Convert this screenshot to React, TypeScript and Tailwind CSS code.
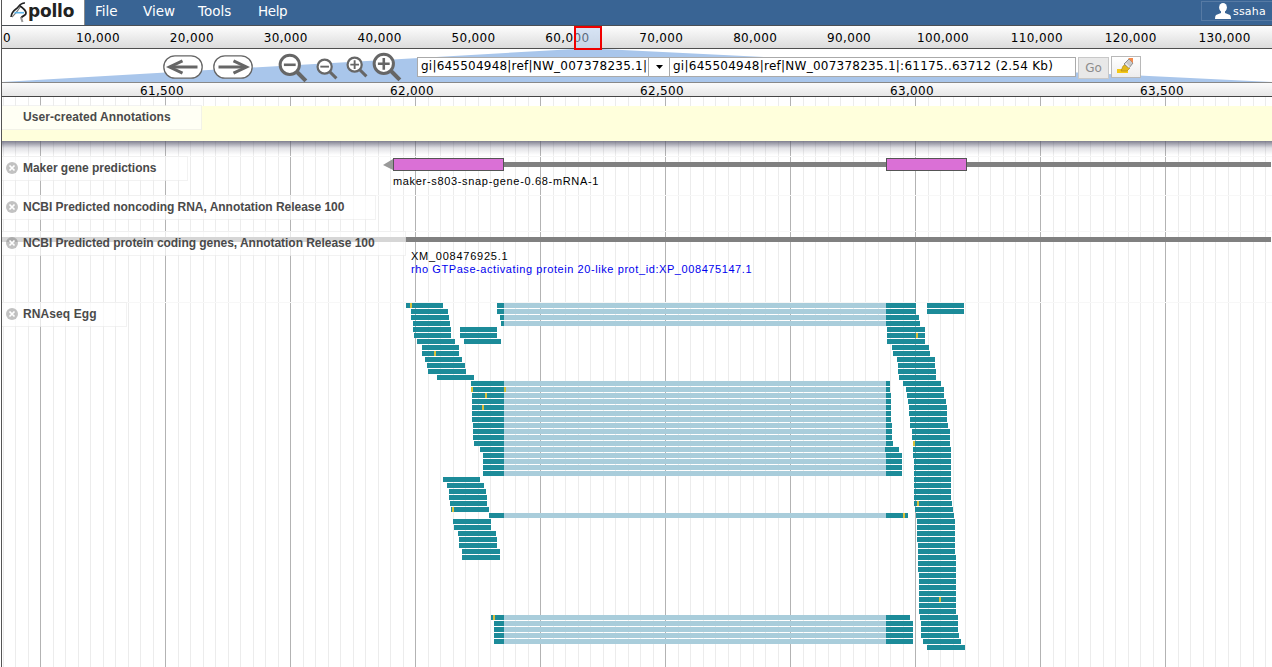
import React from "react";

const MENU = ["File", "View", "Tools", "Help"];
const OVERVIEW = ["10,000", "20,000", "30,000", "40,000", "50,000", "60,000", "70,000", "80,000", "90,000", "100,000", "110,000", "120,000", "130,000"];
const DETAIL = ["61,500", "62,000", "62,500", "63,000", "63,500"];

// [row, start, end]
const READS: number[][] = [
  [0, 406, 443], [1, 411, 448], [2, 411, 449], [3, 413, 450], [4, 413, 451], [5, 414, 451], [6, 417, 455],
  [7, 422, 459], [8, 422, 459], [9, 425, 462], [10, 427, 465], [11, 428, 466], [12, 437, 474],
  [4, 460, 497], [5, 460, 497], [6, 464, 501],
  [29, 443, 480], [30, 447, 484], [31, 449, 486], [32, 449, 487], [33, 450, 487], [34, 451, 489],
  [36, 453, 491], [37, 454, 491], [38, 458, 496], [39, 459, 497], [40, 459, 497], [41, 462, 500], [42, 462, 500],
  [0, 927, 964], [1, 927, 964], [4, 887, 925], [5, 887, 925], [6, 887, 925], [7, 892, 929], [8, 893, 930],
  [9, 897, 935], [10, 898, 935], [11, 898, 936], [12, 899, 936], [13, 903, 941], [14, 906, 944], [15, 907, 944],
  [16, 908, 946], [17, 909, 947], [18, 909, 947], [19, 910, 947], [20, 910, 948], [21, 912, 950], [22, 912, 950],
  [23, 913, 950], [24, 913, 951], [25, 913, 951], [26, 914, 951], [27, 914, 951], [28, 914, 951], [29, 914, 951],
  [30, 914, 951], [31, 914, 951], [32, 914, 951], [33, 914, 952], [34, 915, 953], [35, 916, 954], [36, 917, 955],
  [37, 917, 955], [38, 917, 955], [39, 917, 955], [40, 918, 955], [41, 918, 955], [42, 918, 956], [43, 918, 956],
  [44, 918, 956], [45, 919, 956], [46, 919, 956], [47, 919, 956], [48, 919, 956], [49, 919, 956], [50, 919, 956],
  [51, 919, 956], [52, 920, 958], [53, 921, 958], [54, 921, 958], [55, 921, 959], [56, 923, 961], [57, 927, 965],
];

// reads split over an intron: [row, start, end, start of the second exon]
const SPLICED: number[][] = [
  [0, 497, 916, 886], [1, 497, 916, 886], [2, 500, 919, 886], [3, 501, 920, 886],
  [13, 471, 890, 886], [14, 471, 890, 886], [15, 472, 891, 886], [16, 472, 891, 886], [17, 472, 891, 886],
  [18, 472, 891, 886], [19, 472, 891, 886], [20, 473, 892, 886], [21, 473, 892, 886], [22, 473, 892, 886],
  [23, 474, 893, 886], [24, 480, 899, 885], [25, 483, 902, 886], [26, 483, 902, 886], [27, 483, 902, 886],
  [28, 483, 902, 886], [35, 489, 908, 886],
  [52, 491, 910, 886], [53, 494, 913, 886], [54, 494, 913, 886], [55, 494, 913, 886], [56, 494, 913, 886],
];

// mismatches: [row, x]
const MISMATCHES: number[][] = [
  [0, 410], [8, 434], [14, 471], [14, 504], [15, 485], [17, 482], [34, 452], [52, 493],
  [5, 916], [23, 913], [33, 917], [35, 903], [49, 939],
];

const rowY = (row: number) => 303 + row * 6;

function Logo() {
  return (
    <div className="flex h-[25px] w-[83px] shrink-0 items-start border-r border-[#8a8a8a] bg-white pl-2">
      <svg className="mt-px h-[23px] w-[18px] shrink-0" viewBox="0 0 18 23" fill="none">
        <path d="M15 2C10 1.5 9 6 6 8C3 10 1.5 12 1 16" stroke="#222" strokeWidth="1.6" />
        <path d="M2 16C5 13 8 10 10 6" stroke="#777" strokeWidth="1.2" />
        <path d="M10 5C13 7 16 9 16 12C16 15 13 14 11 17" stroke="#222" strokeWidth="1.8" />
        <path d="M11 16.5L12.5 21" stroke="#999" strokeWidth="2" />
        <path d="M4.5 11.7H14" stroke="#5bb5ea" strokeWidth="1.6" />
      </svg>
      <span className="font-['DejaVu_Sans'] text-[17px] font-bold leading-[23px] tracking-[-0.2px] text-[#222]">pollo</span>
    </div>
  );
}

function ArrowButton({ right = false }: { right?: boolean }) {
  return (
    <svg className={right ? "h-6 w-10 rotate-180" : "h-6 w-10"} viewBox="0 0 40 24" fill="none">
      <rect x="0.8" y="0.8" width="38.4" height="22.4" rx="11.2" fill="#fff" stroke="#666" strokeWidth="1.3" />
      <path d="M34.5 12H8" stroke="#666" strokeWidth="3" />
      <path d="M19.5 5.8L6.5 12L19.5 18.2" stroke="#666" strokeWidth="3" />
    </svg>
  );
}

function Magnifier({ plus = false, className }: { plus?: boolean; className: string }) {
  return (
    <svg className={className} viewBox="0 0 28 28" fill="none">
      <path d="M18 18L26 26" stroke="#666" strokeWidth="3.8" />
      <circle cx="11" cy="11" r="9" fill="#fff" stroke="#666" strokeWidth="2.8" />
      <path d={plus ? "M5.5 11H16.5M11 5.5V16.5" : "M5.5 11H16.5"} stroke="#666" strokeWidth="2.4" />
    </svg>
  );
}

function Highlighter() {
  return (
    <svg className="h-4 w-[18px]" viewBox="0 0 18 16">
      <rect x="0" y="11" width="11" height="4" fill="#f5c816" />
      <path d="M4 13L6 8L9 6L13 10L10 13Z" fill="#e4b81a" stroke="#a98313" strokeWidth=".6" />
      <path d="M7 6L12 1L16 5L12 10Z" fill="#c9c9c9" stroke="#777" strokeWidth=".8" />
      <path d="M8.5 5.5L12.5 9.5" stroke="#eee" strokeWidth="1.3" />
      <path d="M11 0H16V5Z" fill="#f58a4b" />
    </svg>
  );
}

function Label({ text, className, closable = true }: { text: string; className: string; closable?: boolean }) {
  return (
    <div className={`relative z-10 flex h-[25px] items-center border border-l-0 border-[#8888881c] bg-white/68 pl-1 ${className}`}>
      {closable && (
        <svg className="absolute left-[4px] top-[5px] size-3" viewBox="0 0 12 12">
          <circle cx="6" cy="6" r="6" fill="#777" fillOpacity=".45" />
          <path d="M3.5 3.5L8.5 8.5M8.5 3.5L3.5 8.5" stroke="#fff" strokeWidth="1.7" />
        </svg>
      )}
      <span className="whitespace-nowrap pb-[2px] pl-[17px] font-bold text-[#4a4a4a]">{text}</span>
    </div>
  );
}

function Grid() {
  const lines = Array.from({ length: 102 }, (_, i) => i - 3);
  return (
    <svg className="absolute left-0 top-0 h-[570px] w-[1270px]" viewBox="2 97 1270 570" shapeRendering="crispEdges">
      {lines.map((k) => (
        <rect key={k} x={Math.round(40 + k * 12.5)} y="97" width="1" height="570" fill={k % 10 === 0 ? "#b3b3b3" : "#ececec"} />
      ))}
    </svg>
  );
}

function Reads() {
  return (
    <svg className="absolute left-0 top-0 h-[365px] w-[1270px]" viewBox="2 302 1270 365" shapeRendering="crispEdges">
      {READS.map(([row, a, b], i) => (
        <rect key={i} x={a} y={rowY(row)} width={b - a} height="5" fill="#1c8b99" />
      ))}
      {SPLICED.map(([row, a, b, exon]) => (
        <g key={row}>
          <rect x={a} y={rowY(row)} width={504 - a} height="5" fill="#1c8b99" />
          <rect x="504" y={rowY(row)} width={exon - 504} height="5" fill="#a9cddb" />
          <rect x={exon} y={rowY(row)} width={b - exon} height="5" fill="#1c8b99" />
        </g>
      ))}
      {MISMATCHES.map(([row, x]) => (
        <rect key={`${row}-${x}`} x={x} y={rowY(row)} width="2" height="5" fill="#d8bf3c" />
      ))}
    </svg>
  );
}

export default function App() {
  return (
    <div className="h-[667px] w-[1272px] overflow-hidden bg-white pl-px font-['DejaVu_Sans',sans-serif]">
      <div className="flex h-full flex-col border-l border-[#555]">
        <header className="flex h-[26px] shrink-0 border-b border-[#4a4f55] bg-[#396494]">
          <Logo />
          <nav className="flex h-[23px] items-center text-[13.5px] text-white">
            {MENU.map((m, i) => (
              <span key={m} className={["ml-[10px] w-[48px]", "w-[55px]", "w-[60px]", "w-[50px] tracking-[-0.4px]"][i]}>{m}</span>
            ))}
          </nav>
          <div className="ml-auto mt-px flex h-5 w-[71px] items-center border border-r-0 border-[#567aa4] pl-[13px] text-[11px] tracking-[0.2px] text-white">
            <svg className="mr-[2px] h-4 w-4 shrink-0" viewBox="0 0 16 16" fill="#fff">
              <ellipse cx="8" cy="4.5" rx="3.9" ry="4.5" />
              <path d="M6 8H10V10L15 12Q16 13 16 16H0Q0 13 1 12L6 10Z" />
            </svg>
            <span className="mt-[2px]">ssaha</span>
          </div>
        </header>

        <div className="relative flex h-[23px] shrink-0 border-b border-[#4f4f4f] bg-linear-to-b from-[#fdfdfd] to-[#dcdcdc] text-[12px] leading-[24px] tracking-[0.35px] text-black">
          <span className="w-[49px] shrink-0 pl-px">0</span>
          {OVERVIEW.map((t) => (
            <span key={t} className="w-[93.9px] shrink-0 text-center">{t}</span>
          ))}
          <div className="absolute left-[572px] top-0 z-10 h-6 w-7 border-2 border-[#f00000] bg-[#b4cdf0]/50" />
        </div>

        <div className="relative h-[33px] shrink-0">
          <svg className="absolute left-0 top-0 h-[33px] w-[1270px]" viewBox="2 49 1270 33">
            <path d="M575 49H602L1272 82H2Z" fill="#a9c6eb" />
          </svg>
          <div className="relative flex h-full items-start">
            <div className="ml-[161px] mt-[6px] flex gap-[10px]">
              <ArrowButton />
              <ArrowButton right />
            </div>
            <Magnifier className="ml-[25px] mt-[4px] size-[30px]" />
            <Magnifier className="ml-[8px] mt-[9px] size-[22px]" />
            <Magnifier plus className="ml-[8px] mt-[7px] size-[22px]" />
            <Magnifier plus className="ml-[4px] mt-[3px] size-[30px]" />
            <div className="ml-[15px] mt-2 flex h-5 w-[253px] border border-[#aaa] bg-white text-[12px] leading-[17px] text-black">
              <span className="w-[230px] shrink-0 overflow-hidden whitespace-nowrap pl-[3px] tracking-[0.22px]">gi|645504948|ref|NW_007378235.1|</span>
              <span className="flex h-full w-[21px] items-center justify-center border-l border-[#aaa]">
                <svg className="h-1 w-[7px]" viewBox="0 0 7 4"><path d="M0 0H7L3.5 4Z" /></svg>
              </span>
            </div>
            <div className="mt-2 h-5 w-[406px] whitespace-nowrap border border-l-0 border-[#aaa] bg-white pl-[3px] text-[12px] leading-[16px] tracking-[0.25px] text-black">
              gi|645504948|ref|NW_007378235.1|:61175..63712 (2.54 Kb)
            </div>
            <div className="ml-[2px] mt-2 h-[22px] w-[31px] border border-[#c8c8c8] bg-[#e8e8e8] text-center text-[12px] leading-[20px] text-[#8c8c8c]">Go</div>
            <div className="ml-[2px] mt-[7px] flex h-[22px] w-[30px] justify-center border border-[#b8b8b8] bg-linear-to-b from-white to-[#ededed] pt-px">
              <Highlighter />
            </div>
          </div>
        </div>

        <div className="flex h-[15px] shrink-0 border-b border-t border-b-[#444] border-t-[#888] bg-linear-to-b from-[#fbfbfb] to-[#e6e6e6] pl-[35px] text-[12px] leading-[16px] tracking-[0.35px] text-black">
          {DETAIL.map((t) => (
            <span key={t} className="w-[250px] shrink-0 text-center">{t}</span>
          ))}
        </div>

        <main className="relative h-[570px] shrink-0 overflow-hidden font-['Liberation_Sans',sans-serif] text-[12px] text-black">
          <Grid />
          <section className="relative mt-[9px] h-[35px] bg-[#ffffdc]">
            <Label text="User-created Annotations" closable={false} className="-top-px w-[200px] tracking-[0.06px]" />
            <div className="absolute inset-x-0 top-full h-[14px] bg-linear-to-b from-[#55556a]/75 via-[#66667a]/20 to-transparent" />
          </section>
          <section className="relative mt-[15px] h-[39px]">
            <div className="absolute inset-x-0 top-0 h-px bg-[#f7f7f7]" />
            <Label text="Maker gene predictions" className="w-[186px] tracking-[-0.03px]" />
            <svg className="absolute left-0 top-0 h-[20px] w-[1270px]" viewBox="2 156 1270 20">
              <rect x="504" y="162" width="767" height="5" fill="#808080" />
              <path d="M383 165L393 159V170Z" fill="#999" />
              <rect x="393.5" y="158.5" width="110" height="12" fill="#da70d6" stroke="#555" />
              <rect x="886.5" y="158.5" width="80" height="12" fill="#da70d6" stroke="#555" />
            </svg>
            <span className="absolute left-[391px] top-[18px] whitespace-nowrap text-[11px] leading-[14px] tracking-[0.67px]">maker-s803-snap-gene-0.68-mRNA-1</span>
          </section>
          <section className="relative h-[36px]">
            <div className="absolute inset-x-0 top-0 h-px bg-[#f7f7f7]" />
            <Label text="NCBI Predicted noncoding RNA, Annotation Release 100" className="w-[374px] tracking-[-0.03px]" />
          </section>
          <section className="relative h-[71px]">
            <div className="absolute inset-x-0 top-0 h-px bg-[#f7f7f7]" />
            <div className="absolute left-0 right-px top-[6px] h-[5px] bg-[#808080]" />
            <Label text="NCBI Predicted protein coding genes, Annotation Release 100" className="w-[404px] tracking-[-0.035px]" />
            <div className="relative -mt-[6px] ml-[409px] whitespace-nowrap text-[11px] leading-[13px]">
              <p className="tracking-[0.75px]">XM_008476925.1</p>
              <p className="tracking-[0.58px] text-[#0000ee]">rho GTPase-activating protein 20-like prot_id:XP_008475147.1</p>
            </div>
          </section>
          <section className="relative h-[365px]">
            <div className="absolute inset-x-0 top-0 h-px bg-[#f7f7f7]" />
            <Label text="RNAseq Egg" className="w-[125px] tracking-[0.1px]" />
            <Reads />
          </section>
        </main>
      </div>
    </div>
  );
}
